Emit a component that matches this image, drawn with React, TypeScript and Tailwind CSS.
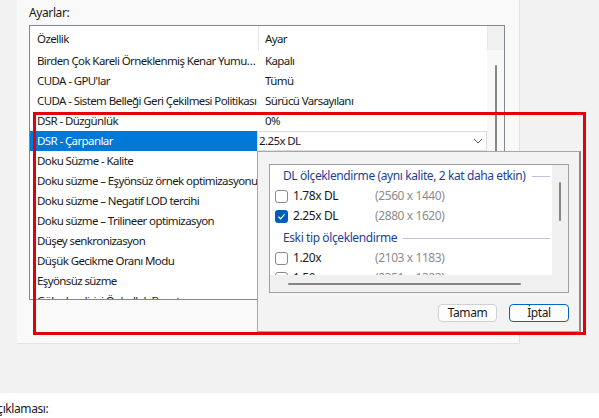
import React from "react";

type Row = { name: string; value: string };

const rows: Row[] = [
    { name: "Birden Çok Kareli Örneklenmiş Kenar Yumu…", value: "Kapalı" },
    { name: "CUDA - GPU'lar", value: "Tümü" },
    { name: "CUDA - Sistem Belleği Geri Çekilmesi Politikası", value: "Sürücü Varsayılanı" },
    { name: "DSR - Düzgünlük", value: "0%" },
    { name: "DSR - Çarpanlar", value: "2.25x DL" },
    { name: "Doku Süzme - Kalite", value: "" },
    { name: "Doku süzme – Eşyönsüz örnek optimizasyonu", value: "" },
    { name: "Doku süzme – Negatif LOD tercihi", value: "" },
    { name: "Doku süzme – Trilineer optimizasyon", value: "" },
    { name: "Düşey senkronizasyon", value: "" },
    { name: "Düşük Gecikme Oranı Modu", value: "" },
    { name: "Eşyönsüz süzme", value: "" },
    { name: "Gölgelendirici Önbellek Boyutu", value: "" },
];

const Check = ({ checked }: { checked?: boolean }) =>
    checked ? (
        <span className="w-[13px] h-[13px] shrink-0 rounded-[3px] bg-[#005fb8] flex items-center justify-center">
            <svg width="9" height="9" viewBox="0 0 9 9">
                <path d="M1.5 4.8 L3.6 6.8 L7.5 2.4" fill="none" stroke="white" strokeWidth="1.2" />
            </svg>
        </span>
    ) : (
        <span className="w-[13px] h-[13px] shrink-0 rounded-[3px] border border-[#8a8a8a] bg-white" />
    );

const GroupHead = ({ label }: { label: string }) => (
    <div className="flex items-center h-[20px] pl-[13px] pr-[2px] gap-[6px]">
        <span className="text-[#1d3f99] whitespace-nowrap">{label}</span>
        <span className="flex-1 h-px bg-[#bcc4dc]" />
    </div>
);

const Option = ({ label, res, checked }: { label: string; res: string; checked?: boolean }) => (
    <div className="flex items-center h-[20px] pl-[5px]">
        <Check checked={checked} />
        <span className="ml-[5px] w-[82px] shrink-0 whitespace-nowrap">{label}</span>
        <span className="text-[#8c8c8c] whitespace-nowrap">{res}</span>
    </div>
);

export default function App() {
    return (
        <div
            className="relative w-[599px] h-[418px] overflow-hidden bg-[#f2f2f2] text-[12px] leading-[16px] tracking-[-0.4px] text-[#1a1a1a]"
            style={{ fontFamily: '"Noto Sans", "Open Sans", sans-serif' }}
        >
            {/* settings panel */}
            <div className="ml-[17px] w-[503px] h-[344px] bg-[#f9f9f9] border-r border-b border-[#e3e3e3] pl-[12px] pt-[5px]">
                <p>Ayarlar:</p>
                <div className="mt-[4px] w-[476px] h-[275px] border border-[#828790] bg-white flex overflow-hidden text-[11.5px] tracking-[-0.6px]">
                    <div className="w-[457px] flex flex-col">
                        <div className="flex h-[25px] shrink-0 items-center">
                            <div className="w-[229px] h-full pl-[7px] flex items-center border-r border-[#e5e5e5]">Özellik</div>
                            <div className="pl-[6px]">Ayar</div>
                        </div>
                        {rows.map((r, i) =>
                            i === 4 ? (
                                <div key={i} className="flex h-[20px] shrink-0">
                                    <div className="w-[227px] pl-[7px] flex items-center bg-[#0078d7] text-white whitespace-nowrap">
                                        {r.name}
                                    </div>
                                    <div className="flex-1 flex items-center justify-between border border-[#dcdcdc] bg-white pl-[1px] pr-[3px]">
                                        <span>{r.value}</span>
                                        <svg width="10" height="6" viewBox="0 0 10 6">
                                            <path d="M1 1 L5 5 L9 1" fill="none" stroke="#5a5a5a" strokeWidth="1" />
                                        </svg>
                                    </div>
                                </div>
                            ) : (
                                <div key={i} className="flex h-[20px] shrink-0 items-center">
                                    <div className="w-[229px] pl-[7px] whitespace-nowrap overflow-hidden">{r.name}</div>
                                    <div className="pl-[6px] whitespace-nowrap">{r.value}</div>
                                </div>
                            )
                        )}
                    </div>
                    <div className="flex-1 flex flex-col">
                        <div className="h-[24px] bg-[#f0f0f0] border-l border-[#e8e8e8]" />
                        <div className="flex-1 bg-[#f8f8f8] pt-[15px] flex justify-center">
                            <div className="w-[2px] h-[120px] rounded-full bg-[#858585]" />
                        </div>
                    </div>
                </div>
            </div>

            <div className="h-[49px]" />
            <div className="h-[25px] bg-white pt-[8px]">
                <p className="-ml-[10px] whitespace-nowrap">Açıklaması:</p>
            </div>

            {/* dropdown popup */}
            <div className="absolute left-[257px] top-[151px] w-[324px] h-[181px] bg-[#f3f3f3] border border-[#a8a8a8] border-r-2 border-r-[#8c8c8c] flex flex-col">
                <div className="mt-[12px] ml-[11px] w-[300px] h-[129px] border border-[#a0a0a0] bg-[#f0f0f0] flex flex-col">
                    <div className="flex h-[110px]">
                        <div className="flex-1 bg-white overflow-hidden pt-px">
                            <GroupHead label="DL ölçeklendirme (aynı kalite, 2 kat daha etkin)" />
                            <Option label="1.78x DL" res="(2560 x 1440)" />
                            <Option label="2.25x DL" res="(2880 x 1620)" checked />
                            <div className="h-[2px]" />
                            <GroupHead label="Eski tip ölçeklendirme" />
                            <Option label="1.20x" res="(2103 x 1183)" />
                            <Option label="1.50x" res="(2351 x 1323)" />
                        </div>
                        <div className="w-[16px] pt-[17px] flex justify-center">
                            <div className="w-[2px] h-[39px] rounded-full bg-[#858585]" />
                        </div>
                    </div>
                    <div className="flex-1 flex items-center pl-[18px]">
                        <div className="w-[233px] h-[2px] rounded-full bg-[#858585]" />
                    </div>
                </div>
                <div className="mt-[11px] mr-[10px] flex justify-end gap-[12px]">
                    <button className="w-[59px] h-[18px] rounded-[4px] border border-[#d0d0d0] bg-[#fdfdfd] leading-none">Tamam</button>
                    <button className="w-[60px] h-[18px] rounded-[4px] border border-[#0067c0] bg-[#fdfdfd] leading-none">İptal</button>
                </div>
            </div>

            {/* red highlight annotation */}
            <div className="absolute left-[33px] top-[112px] w-[553px] h-[223px] border-[3px] border-[#e3000b]" />
        </div>
    );
}
